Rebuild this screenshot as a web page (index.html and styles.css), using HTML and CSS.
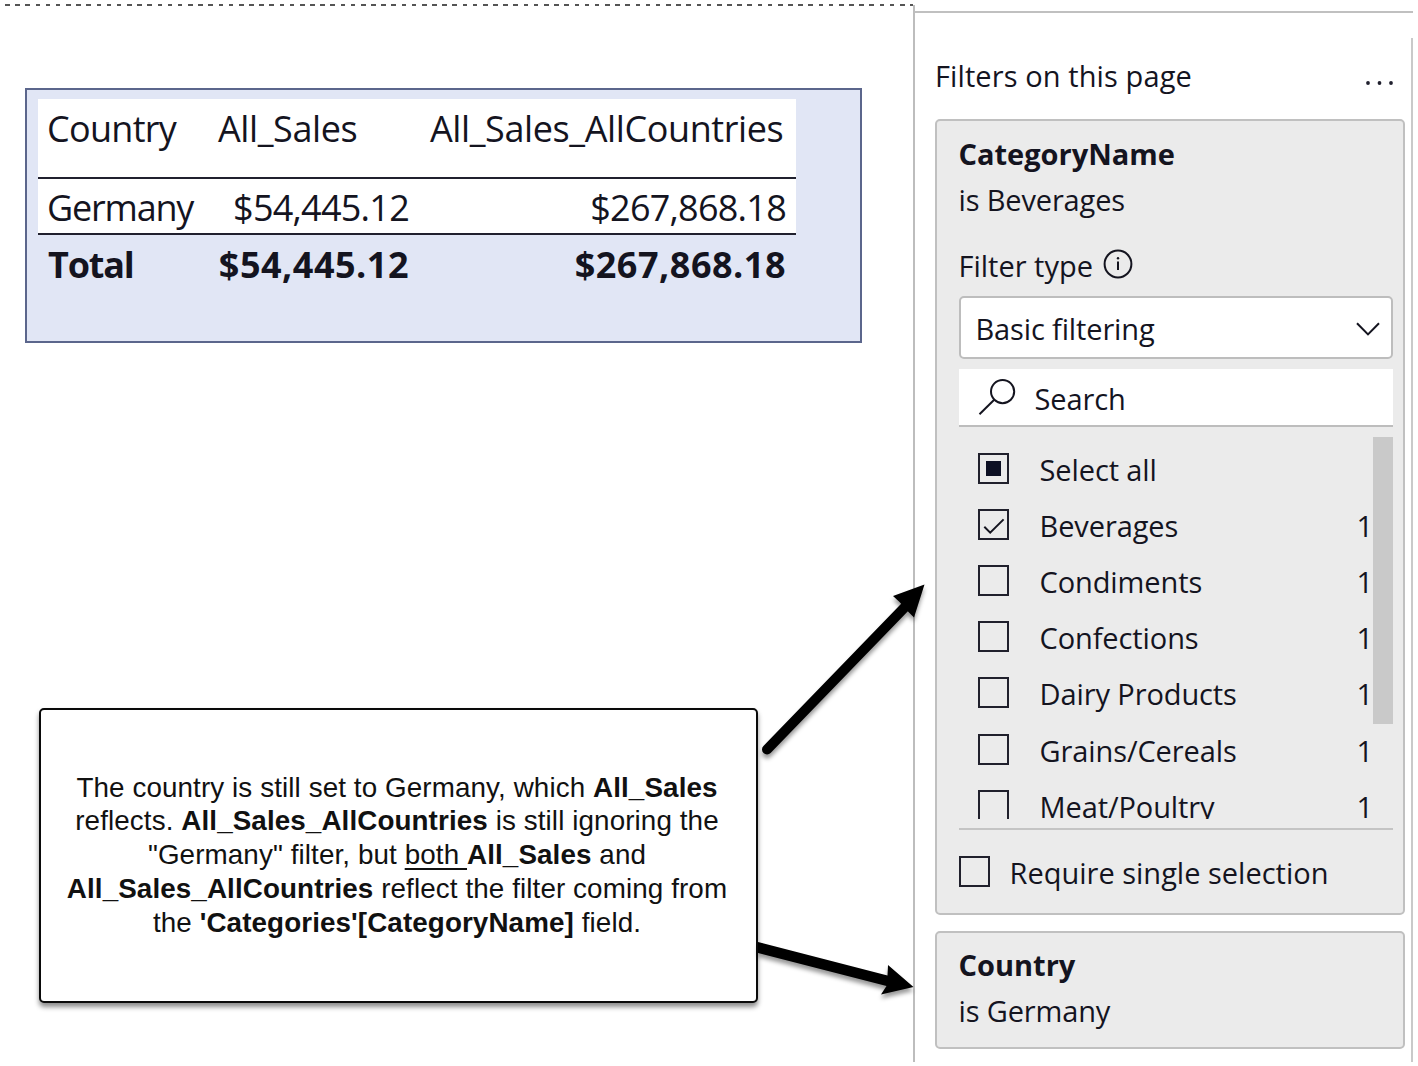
FILE: index.html
```html
<!DOCTYPE html>
<html lang="en">
<head>
<meta charset="utf-8">
<title>Sales report filters</title>
<link rel="stylesheet" href="styles.css">
</head>
<body>
<div class="page">
  <main class="canvas">
    <section class="visual">
      <table class="sales">
        <thead>
          <tr><th class="col-country">Country</th><th class="col-sales">All_Sales</th><th class="col-all">All_Sales_AllCountries</th></tr>
        </thead>
        <tbody>
          <tr><td class="name">Germany</td><td class="num">$54,445.12</td><td class="num">$267,868.18</td></tr>
        </tbody>
        <tfoot>
          <tr><td class="total-label">Total</td><td class="num">$54,445.12</td><td class="num">$267,868.18</td></tr>
        </tfoot>
      </table>
    </section>
    <aside class="callout">
      <p>The country is still set to Germany, which <b>All_Sales</b><br>
      reflects. <b>All_Sales_AllCountries</b> is still ignoring the<br>
      "Germany" filter, but <u>both </u><b>All_Sales</b> and<br>
      <b>All_Sales_AllCountries</b> reflect the filter coming from<br>
      the <b>'Categories'[CategoryName]</b> field.</p>
    </aside>
  </main>

  <section class="pane">
    <div class="pane-top"></div>
    <header class="pane-head">
      <span class="pane-title">Filters on this page</span>
      <svg class="more" width="30" height="6" viewBox="0 0 30 6"><circle cx="3" cy="3" r="1.9"/><circle cx="14.5" cy="3" r="1.9"/><circle cx="26" cy="3" r="1.9"/></svg>
    </header>

    <article class="card card-category">
      <h2>CategoryName</h2>
      <p class="summary">is Beverages</p>
      <div class="type-label">
        <span>Filter type</span>
        <svg class="info" width="30" height="30" viewBox="0 0 30 30"><circle cx="15" cy="15" r="13.4"/><path d="M15 12.6V21"/><circle class="dot" cx="15" cy="9.3" r="1.2"/></svg>
      </div>
      <div class="select">
        <span>Basic filtering</span>
        <svg width="26" height="16" viewBox="0 0 26 16"><path d="M2 2.2 13 13.4 24 2.2"/></svg>
      </div>
      <div class="search">
        <svg width="38" height="38" viewBox="0 0 38 38"><circle cx="24.6" cy="13.6" r="11.6"/><path d="M16.2 21.8 1.5 36.2"/></svg>
        <span>Search</span>
      </div>
      <div class="list-wrap">
        <ul class="list">
          <li><i class="box partial"></i><span class="label">Select all</span></li>
          <li><i class="box"><svg width="27" height="27" viewBox="0 0 27 27"><path d="M4.3 15.8 10.2 21.7 23.6 8.4"/></svg></i><span class="label">Beverages</span><span>1</span></li>
          <li><i class="box"></i><span class="label">Condiments</span><span>1</span></li>
          <li><i class="box"></i><span class="label">Confections</span><span>1</span></li>
          <li><i class="box"></i><span class="label">Dairy Products</span><span>1</span></li>
          <li><i class="box"></i><span class="label">Grains/Cereals</span><span>1</span></li>
          <li><i class="box"></i><span class="label">Meat/Poultry</span><span>1</span></li>
        </ul>
        <div class="thumb"></div>
      </div>
      <div class="single"><i class="box"></i><span>Require single selection</span></div>
    </article>

    <article class="card card-country">
      <h2>Country</h2>
      <p class="summary">is Germany</p>
    </article>
  </section>

  <svg class="arrows" width="1418" height="1066" viewBox="0 0 1418 1066">
    <path class="shaft" d="M767 749.5 905 607"/>
    <path d="M924.5 584.5 893 596 899.5 602 908 611.5 914 617.5Z"/>
    <path d="M758 942 887.5 975.5 888 965 913.5 987 881 994.5 886.5 986 758 953Z"/>
  </svg>
</div>
</body>
</html>
```
FILE: styles.css
```css
* { box-sizing: border-box; }

body {
  margin: 0;
  background: #fff;
  color: #14141f;
  font-family: "Open Sans", "Noto Sans", sans-serif;
}

.page {
  position: relative;
  display: grid;
  grid-template-columns: 913px 1fr;
  width: 1418px;
  height: 1066px;
  overflow: hidden;
}

/* report canvas */
.canvas {
  display: flex;
  flex-direction: column;
  align-items: flex-start;
  justify-content: space-between;
  margin-top: 4px;
  padding: 84px 0 63px 25px;
  background: repeating-linear-gradient(90deg, #555 0 4.6px, transparent 4.6px 10.17px) 5px 0 / 908px 2px no-repeat;
}

.visual {
  width: 837px;
  height: 255px;
  padding: 9px 11px;
  border: 2px solid #5b668c;
  background: #e1e6f5;
}

.sales {
  width: 758px;
  table-layout: fixed;
  border-collapse: separate;
  border-spacing: 0;
  font-size: 36px;
  letter-spacing: -0.75px;
}

.sales th,
.sales td {
  padding: 0 10px;
  text-align: left;
  white-space: nowrap;
}

.sales thead th {
  height: 80px;
  padding-bottom: 18px;
  border-bottom: 2px solid #20202e;
  background: #fff;
  font-weight: 400;
  letter-spacing: -0.4px;
  line-height: 56px;
}

.sales .col-country { width: 170px; padding-left: 9px; letter-spacing: -0.7px; }
.sales .col-sales { width: 211px; }
.sales .col-all { width: 377px; padding-left: 11px; }

.sales tbody td {
  height: 56px;
  padding-top: 3px;
  border-bottom: 2px solid #20202e;
  background: #fff;
  line-height: 51px;
}

.sales .num { padding-right: 10px; text-align: right; }
.sales tbody .name { padding-left: 9px; letter-spacing: -1.2px; }

.sales tfoot td {
  padding-top: 2px;
  font-weight: 700;
  line-height: 56px;
  letter-spacing: 0.5px;
}

.sales tfoot .total-label { letter-spacing: -1.2px; }

.callout {
  display: flex;
  align-items: center;
  justify-content: center;
  width: 719px;
  height: 295px;
  margin-left: 14px;
  border: 2px solid #0a0a0a;
  border-radius: 5px;
  background: #fff;
  box-shadow: 0 4px 5px rgba(0, 0, 0, 0.45);
  color: #111;
  font: 27.8px/33.8px "Liberation Sans", Arial, sans-serif;
  letter-spacing: 0.1px;
  text-align: center;
  white-space: nowrap;
}

.callout p { margin: 0 3px 1px 0; }
.callout u { text-decoration-thickness: 1.5px; text-underline-offset: 4px; text-decoration-skip-ink: none; }

/* filter pane */
.pane {
  margin: 5px 5px 4px 0;
  padding: 0 8px 0 20px;
  border-left: 2px solid #bdbdbd;
  background: linear-gradient(#c9c9c9, #c9c9c9) 100% 33px / 2px 100% no-repeat;
  font-size: 29px;
}

.pane-top {
  height: 8px;
  margin: 0 -8px 0 -20px;
  border-bottom: 2px solid #c0c0c0;
}

.pane-head {
  display: flex;
  align-items: center;
  justify-content: space-between;
  height: 106px;
  padding: 0 10px 0 0;
}

.pane-title { line-height: 46px; margin-top: 19px; letter-spacing: 0.1px; }
.more { margin-top: 34px; fill: #20202e; }

.card {
  padding: 10px 10px 0 21.5px;
  border: 2px solid #c0c0c0;
  border-radius: 5px;
  background: #ebebeb;
}

.card-category { height: 796px; }
.card-country { height: 118px; margin-top: 16px; padding-top: 9px; }

.card h2 {
  margin: 0;
  font-size: 29px;
  font-weight: 700;
  line-height: 46px;
}

.summary { margin: 0; line-height: 46px; letter-spacing: -0.15px; }

.type-label {
  display: flex;
  align-items: center;
  gap: 10px;
  height: 46px;
  margin-top: 19px;
}

.info { margin-top: -2px; }
.info circle, .info path,
.select path, .search circle, .search path,
.box path { fill: none; stroke: #14141f; stroke-width: 2; }
.info .dot { fill: #14141f; stroke: none; }

.select {
  display: flex;
  align-items: center;
  justify-content: space-between;
  height: 63px;
  margin-top: 8px;
  padding: 2px 10px 0 15px;
  border: 2px solid #bdbdbd;
  border-radius: 5px;
  background: #fff;
  letter-spacing: -0.14px;
}

.search {
  display: flex;
  align-items: center;
  gap: 19px;
  height: 58px;
  margin-top: 10px;
  padding-left: 19px;
  border-bottom: 2px solid #bdbdbd;
  background: #fff;
}

.search svg { margin-top: -1px; }
.search span { margin-top: 2px; letter-spacing: -0.1px; }

.list-wrap {
  display: flex;
  height: 382px;
  margin-top: 10px;
  overflow: hidden;
}

.list {
  flex: 1;
  margin: 0;
  padding: 3px 0 0 19px;
  list-style: none;
  letter-spacing: -0.1px;
}

.list li { display: flex; align-items: center; height: 56.2px; }
.list span { padding-top: 2px; }
.list .label { flex: 1; margin-left: 31px; }

.thumb { width: 20px; height: 287px; background: #c9c9c9; }

.box {
  display: grid;
  flex: none;
  place-items: center;
  width: 31px;
  height: 31px;
  border: 2px solid #20202c;
}

.partial::before { content: ""; width: 15px; height: 15px; background: #0d1024; }

.single {
  display: flex;
  align-items: center;
  gap: 20px;
  height: 67px;
  margin-top: 9px;
  padding-top: 20px;
  border-top: 2px solid #c4c4c4;
}

.single .box { margin-top: -2px; }

/* annotation arrows lie over both columns */
.arrows {
  position: absolute;
  inset: 0;
  pointer-events: none;
  filter: drop-shadow(0 4px 2px rgba(0, 0, 0, 0.4));
}

.arrows .shaft { stroke: #000; stroke-width: 10; stroke-linecap: round; }
```
